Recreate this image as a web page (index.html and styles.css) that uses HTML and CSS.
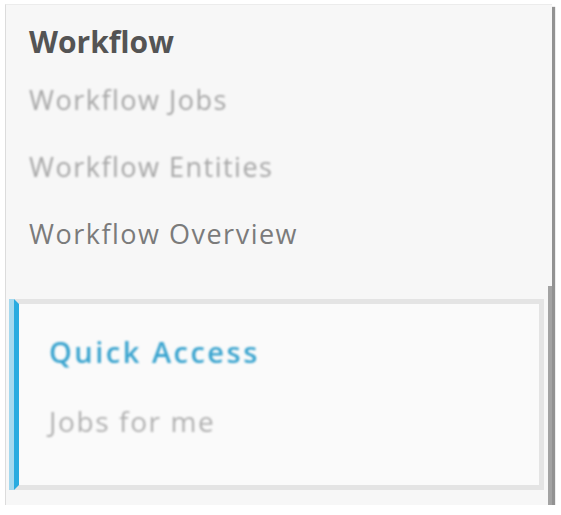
FILE: index.html
```html
<!DOCTYPE html>
<html>
<head>
	<meta charset="utf-8">
	<title>Workflow</title>
	<link rel="stylesheet" href="styles.css">
</head>
<body>
	<div class="panel">
		<div class="menu">
			<h2 class="title">Workflow</h2>
			<a class="item blur" href="#">Workflow Jobs</a>
			<a class="item blur" href="#">Workflow Entities</a>
			<a class="item" href="#">Workflow Overview</a>
		</div>
		<div class="lower">
			<div class="quick">
				<a class="quick-title blur" href="#">Quick Access</a>
				<a class="quick-item blur" href="#">Jobs for me</a>
			</div>
		</div>
	</div>
</body>
</html>
```

FILE: styles.css
```css
*{
	padding: 0;
	margin: 0;
	box-sizing: border-box;
}
body{
	background-color: #ffffff;
	font-family: "Open Sans", "Noto Sans", sans-serif;
	padding-top: 4px;
}
.panel{
	margin-left: 5px;
	width: 547px;
	height: 501px;
	background-color: #f7f7f7;
	border-left: 1px solid #dcdcdc;
	border-top: 1px solid #ececec;
	box-shadow: 3px 3px 1px #929292;
	display: flex;
	flex-direction: column;
}
.menu{
	display: flex;
	flex-direction: column;
	padding: 15px 0 0 23px;
	height: 281px;
}
.title{
	font-size: 30px;
	font-weight: bold;
	color: #545454;
	line-height: 44px;
	margin-bottom: 2px;
}
.item{
	font-size: 27px;
	letter-spacing: 1.5px;
	color: #7b7b7b;
	text-decoration: none;
	line-height: 67px;
}
.blur{
	filter: blur(1.3px);
}
.item.blur{
	color: #a6a6a6;
}
.lower{
	flex: 1;
	border-right: 4px solid #a3a3a3;
	padding: 13px 4px 15px 3px;
	display: flex;
}
.quick{
	flex: 1;
	background-color: #fafafa;
	border: 5px solid #e4e4e4;
	border-left: 5px solid #29abe0;
	box-shadow: -5px 0 0 #a4d9ef;
	margin-left: 5px;
	display: flex;
	flex-direction: column;
	padding: 28px 0 0 30px;
	gap: 29px;
}
.quick-title{
	font-size: 29px;
	font-weight: 600;
	letter-spacing: 2.5px;
	color: #3aa4cf;
	text-decoration: none;
	line-height: 40px;
}
.quick-item{
	font-size: 28px;
	letter-spacing: 1.6px;
	color: #b0b0b0;
	text-decoration: none;
	line-height: 40px;
}
```
